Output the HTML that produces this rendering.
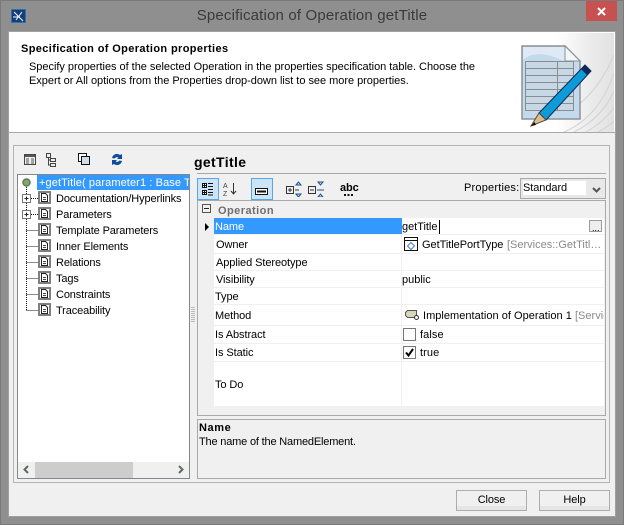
<!DOCTYPE html>
<html><head><meta charset="utf-8"><style>
html,body{margin:0;padding:0;width:624px;height:525px;overflow:hidden;background:#8f8f8f}
*{box-sizing:border-box}
.a{position:absolute}
.t{position:absolute;font:11px/14px "Liberation Sans",sans-serif;color:#000;white-space:nowrap}
.h{position:absolute;height:1px;background:#f0f0f0}
.v{position:absolute;width:1px;background:#f0f0f0}
.l{letter-spacing:-.08px}
.n{letter-spacing:-.125px}
.btn{position:absolute;top:490px;height:21px;background:linear-gradient(#f0f0f0 0,#f0f0f0 15px,#e5e5e5 15px);border:1px solid #adadad;font:11px/19px "Liberation Sans",sans-serif;letter-spacing:-.1px;text-align:center;color:#000}
</style></head><body>
<div class="a" style="left:0;top:0;width:624px;height:525px;background:#8f8f8f;border:1px solid #7a7a7a"></div>
<svg class="a" style="left:11px;top:9px" width="16" height="15" viewBox="0 0 16 15"><rect x=".5" y=".5" width="14" height="13" fill="#123f7c" stroke="#3a6ea8"/><path d="M3 3l9 9M11 3L5 11M2 8h7" stroke="#fff" fill="none"/></svg>
<div class="t" style="left:0;width:624px;top:7px;text-align:center;font-size:15px;line-height:18px;color:#3a3a3a;letter-spacing:.17px">Specification of Operation getTitle</div>
<div class="a" style="left:586px;top:1px;width:31px;height:20px;background:#c75050"></div>
<svg class="a" style="left:597px;top:7px" width="9" height="9"><path d="M1 1l7 7M8 1L1 8" stroke="#fff" stroke-width="2"/></svg>

<div class="a" style="left:8px;top:31px;width:608px;height:486px;background:#f0f0f0;border:1px solid #a0a0a0"></div>
<div class="a" style="left:9px;top:32px;width:606px;height:101px;background:#fff;border-bottom:1px solid #a9a9a9"></div>
<svg class="a" style="left:556px;top:33px" width="58" height="99" fill="none">
<defs><linearGradient id="g" x1="0" x2="1"><stop offset="0" stop-color="#fff"/><stop offset=".6" stop-color="#ebebeb"/><stop offset="1" stop-color="#e2e2e2"/></linearGradient></defs>
<rect width="58" height="99" fill="url(#g)"/>
<path d="M8 99C30 90 48 70 58 40M18 99C36 90 50 76 58 58M30 99C42 92 52 84 58 74M8 80C28 72 46 50 58 22M42 99C48 96 54 92 58 88" stroke="#d2d2d2"/>
</svg>
<svg class="a" style="left:520px;top:42px" width="76" height="86" viewBox="0 0 76 86">
<path d="M2 4H45L60 19V77H2Z" fill="#c3d9ec" stroke="#8a929a" stroke-width="1.500"/>
<path d="M3 5H45L46 20C30 12 14 8 3 18Z" fill="#dfe9f3"/>
<path d="M45 4V19H60Z" fill="#f3f7fa" stroke="#8a929a"/>
<path d="M5.500 19.500H53.500V68.500H5.500ZM5.500 26.500H53.500M5.500 33.500H53.500M5.500 40.500H53.500M5.500 47.500H53.500M5.500 54.500H53.500M5.500 61.500H53.500M37.500 19.500V68.500" fill="#c9d5df" fill-opacity=".5" stroke="#8c8c8c"/>
<path d="M65 23L71 29L26 78L19 71Z" fill="#0f9ad8" stroke="#0a2a50"/>
<path d="M65 23L71 29L67 33L61 27Z" fill="#12285a"/>
<path d="M19 71L26 78L11 84Z" fill="#d9bc8f" stroke="#5a4a30"/>
<path d="M11 84L14.500 80L16 83Z" fill="#111"/>
</svg>
<div class="t" style="left:21px;top:42px;font-weight:bold;letter-spacing:.37px">Specification of Operation properties</div>
<div class="t" style="left:29px;top:60px;letter-spacing:-.03px">Specify properties of the selected Operation in the properties specification table. Choose the</div>
<div class="t" style="left:29px;top:74px;letter-spacing:-.03px">Expert or All options from the Properties drop-down list to see more properties.</div>

<div class="a" style="left:13px;top:145px;width:597px;height:338px;border:1px solid #b4b4b4"></div>
<svg class="a" style="left:23px;top:152px" width="110" height="16" viewBox="0 0 110 16" fill="none">
<rect x="1.500" y="2.500" width="11" height="10" fill="#eee" stroke="#444"/><path d="M2 3h10v2H2z" fill="#555"/><path d="M3 7h3M8 7h3M3 9h3M8 9h3M3 11h3M8 11h3" stroke="#555"/>
<path d="M23.500 1.500h4v4h-4zM27.500 6.500h5v3h-5zM27.500 11.500h5v3h-5zM25.500 5.500v7.500h2M25.500 8h2" stroke="#444" fill="#eee"/>
<rect x="55.500" y="1.500" width="8" height="8" fill="#fff" stroke="#111"/><rect x="58.500" y="4.500" width="8" height="8" fill="#cfdde8" stroke="#111"/>
<path d="M89 6a5 5 0 0 1 8-3l2-1v5h-5l1.500-1.500a3 3 0 0 0-4 1zM99 9a5 5 0 0 1-8 3l-2 1V8h5l-1.500 1.500a3 3 0 0 0 4-1z" fill="#0f4c9c"/>
</svg>

<!-- tree -->
<div class="a" style="left:17px;top:174px;width:173px;height:305px;background:#fff;border:1px solid #828790"></div>
<div class="a" style="left:37px;top:175px;width:152px;height:15px;background:#3399ff;overflow:hidden"><div class="t" style="left:2px;top:1px;color:#fff;letter-spacing:.1px">+getTitle( parameter1 : Base Type</div></div>
<svg class="a" style="left:18px;top:175px" width="22" height="146" fill="none">
<circle cx="8.500" cy="7.500" r="3.500" fill="#7fa86a" stroke="#5d7d55" stroke-width="1.500"/>
<path d="M8.500 12V136M13 23.500h8M13 39.500h8M8.500 55.500h12M8.500 71.500h12M8.500 87.500h12M8.500 103.500h12M8.500 119.500h12M8.500 135.500h12" stroke="#111" stroke-dasharray="1 1" shape-rendering="crispEdges"/>
<rect x="4.500" y="19.500" width="8" height="8" fill="#fff" stroke="#777"/><path d="M6.500 23.500h4M8.500 21.500v4" stroke="#222"/>
<rect x="4.500" y="35.500" width="8" height="8" fill="#fff" stroke="#777"/><path d="M6.500 39.500h4M8.500 37.500v4" stroke="#222"/>
</svg>
<svg class="a" style="left:38px;top:191px" width="14" height="128" fill="none">
<path d="M1 1h11v11H1zM1 17h11v11H1zM1 33h11v11H1zM1 49h11v11H1zM1 65h11v11H1zM1 81h11v11H1zM1 97h11v11H1zM1 113h11v11H1z" fill="#fff" stroke="#808080" stroke-width="2"/>
<path d="M3.500 2.500h4l2 2v6h-6zM3.500 18.500h4l2 2v6h-6zM3.500 34.500h4l2 2v6h-6zM3.500 50.500h4l2 2v6h-6zM3.500 66.500h4l2 2v6h-6zM3.500 82.500h4l2 2v6h-6zM3.500 98.500h4l2 2v6h-6zM3.500 114.500h4l2 2v6h-6z" stroke="#222"/>
<path d="M5 6.500h3M5 8.500h3M5 22.500h3M5 24.500h3M5 38.500h3M5 40.500h3M5 54.500h3M5 56.500h3M5 70.500h3M5 72.500h3M5 86.500h3M5 88.500h3M5 102.500h3M5 104.500h3M5 118.500h3M5 120.500h3" stroke="#444"/>
</svg>
<div class="t n" style="left:56px;top:192px">Documentation/Hyperlinks</div>
<div class="t n" style="left:56px;top:208px">Parameters</div>
<div class="t n" style="left:56px;top:224px">Template Parameters</div>
<div class="t n" style="left:56px;top:240px">Inner Elements</div>
<div class="t n" style="left:56px;top:256px">Relations</div>
<div class="t n" style="left:56px;top:272px">Tags</div>
<div class="t n" style="left:56px;top:288px">Constraints</div>
<div class="t n" style="left:56px;top:304px">Traceability</div>
<div class="a" style="left:18px;top:462px;width:171px;height:16px;background:#f0f0f0"></div>
<div class="a" style="left:35px;top:462px;width:98px;height:16px;background:#cdcdcd"></div>
<svg class="a" style="left:23px;top:465px" width="162" height="10" fill="none"><path d="M5 1L1.500 4.500L5 8M156 1L159.500 4.500L156 8" stroke="#666" stroke-width="2"/></svg>
<div class="a" style="left:191px;top:307px;width:4px;height:16px;background:repeating-linear-gradient(#bbb 0 1px,transparent 1px 2px)"></div>

<!-- right -->
<div class="t" style="left:194px;top:154px;font-size:14px;line-height:16px;font-weight:bold;letter-spacing:.35px">getTitle</div>
<div class="a" style="left:197px;top:173px;width:409px;height:1px;background:#a9a9a9"></div>
<div class="a" style="left:197px;top:178px;width:22px;height:22px;background:#cce4f7;border:1px solid #5ba6e8"></div>
<div class="a" style="left:251px;top:178px;width:22px;height:22px;background:#cce4f7;border:1px solid #5ba6e8"></div>
<svg class="a" style="left:200px;top:181px" width="160" height="16" fill="none">
<path d="M2.500 2.500h4v4h-4zM2.500 9.500h4v4h-4z" fill="#fff" stroke="#111"/><path d="M4.500 2.500v4M2.500 4.500h4M4.500 9.500v4M2.500 11.500h4" stroke="#111"/><path d="M8 2.500h5M8 5.500h5M8 8.500h5M8 11.500h5M8 14h5" stroke="#111"/>
<text x="23" y="7" font-family="Liberation Sans" font-size="7" fill="#444">A</text><text x="23" y="15" font-family="Liberation Sans" font-size="7" fill="#444">Z</text><path d="M33.500 2v10M31 10l2.500 3L36 10" stroke="#333"/>
<rect x="55.500" y="7.500" width="12" height="6" fill="#fff" stroke="#111"/><path d="M57 10.500h9" stroke="#111" stroke-width="2"/>
<path d="M86.500 5.500h7v7h-7zM88 9h4M90 7v4M95 9h4" stroke="#333"/><path d="M96 4l2.500-3L101 4zM96 13l2.500 3L101 13z" fill="#cfe0f0" stroke="#1e4f90"/>
<path d="M108.500 5.500h7v7h-7zM110 9h4" stroke="#333"/><path d="M118 1l2.500 3L123 1zM118 16l2.500-3L123 16zM117 9h7" fill="#cfe0f0" stroke="#1e4f90"/>
<path d="M144 14h2M147.500 14h2M151 14h2" stroke="#111" stroke-width="2"/>
</svg>
<div class="t" style="left:340px;top:182px;font-size:11px;line-height:12px;font-weight:bold;letter-spacing:-.1px">abc</div>
<div class="t" style="left:464px;top:181px;letter-spacing:.2px">Properties:</div>
<div class="a" style="left:520px;top:178px;width:86px;height:21px;background:#e8e8e8;border:1px solid #a9a9a9"></div>
<div class="a" style="left:523px;top:181px;width:63px;height:14px;background:#fff"></div>
<div class="t" style="left:523px;top:181px;letter-spacing:-.07px">Standard</div>
<svg class="a" style="left:592px;top:187px" width="10" height="8"><path d="M1 1l3.500 3.500L8 1" fill="none" stroke="#555" stroke-width="2"/></svg>

<div class="a" style="left:197px;top:200px;width:409px;height:216px;border:1px solid #a9a9a9"></div>
<div class="a" style="left:214px;top:218px;width:390px;height:188px;background:#fff"></div>
<div class="a" style="left:214px;top:218px;width:187px;height:16px;background:#3399ff"></div>
<div class="h" style="left:214px;top:234px;width:390px"></div>
<div class="h" style="left:214px;top:253px;width:390px"></div>
<div class="h" style="left:214px;top:270px;width:390px"></div>
<div class="h" style="left:214px;top:287px;width:390px"></div>
<div class="h" style="left:214px;top:304px;width:390px"></div>
<div class="h" style="left:214px;top:325px;width:390px"></div>
<div class="h" style="left:214px;top:343px;width:390px"></div>
<div class="h" style="left:214px;top:361px;width:390px"></div>
<div class="v" style="left:401px;top:234px;height:172px"></div>
<div class="a" style="left:401px;top:218px;width:1px;height:16px;background:#3399ff"></div>
<svg class="a" style="left:202px;top:204px" width="11" height="30" fill="none"><rect x=".5" y=".5" width="8" height="8" stroke="#555"/><path d="M2 4.500h5" stroke="#222"/><path d="M3 19l4 4-4 4z" fill="#000"/></svg>
<div class="t" style="left:218px;top:204px;font-weight:bold;color:#6e6e6e;letter-spacing:.45px">Operation</div>
<div class="t l" style="left:215px;top:220px;color:#fff">Name</div>
<div class="t l" style="left:216px;top:238px">Owner</div>
<div class="t l" style="left:216px;top:256px">Applied Stereotype</div>
<div class="t l" style="left:216px;top:273px">Visibility</div>
<div class="t l" style="left:215px;top:290px">Type</div>
<div class="t l" style="left:215px;top:309px">Method</div>
<div class="t l" style="left:215px;top:328px">Is Abstract</div>
<div class="t l" style="left:215px;top:346px">Is Static</div>
<div class="t l" style="left:215px;top:378px">To Do</div>
<div class="t" style="left:402px;top:220px;letter-spacing:-.03px">getTitle</div>
<div class="a" style="left:439px;top:220px;width:1px;height:14px;background:#000"></div>
<div class="a" style="left:589px;top:220px;width:13px;height:12px;background:#eee;border:1px solid #9a9a9a"></div>
<div class="t" style="left:592px;top:221px;font-size:9px">...</div>
<svg class="a" style="left:404px;top:237px" width="15" height="15" fill="none"><rect x=".5" y=".5" width="13" height="13" fill="#fff" stroke="#111"/><path d="M1 3.500h12" stroke="#111"/><path d="M7 5.500l3.500 3.500L7 12.500 3.500 9z" stroke="#4a78c8"/></svg>
<div class="t" style="left:422px;top:238px;letter-spacing:-.05px">GetTitlePortType</div>
<div class="t" style="left:507px;top:238px;color:#8a8a8a;letter-spacing:0">[Services::GetTitl…</div>
<div class="t" style="left:402px;top:273px;letter-spacing:0">public</div>
<svg class="a" style="left:404px;top:309px" width="16" height="12" fill="none"><path d="M1.500 3.500l2-2h9v7h-9l-2-2z" fill="#d8d8b8" stroke="#555"/><circle cx="12.500" cy="8.500" r="2" fill="#fff" stroke="#333"/></svg>
<div class="a" style="left:423px;top:306px;width:181px;height:18px;overflow:hidden"><div class="t" style="left:0;top:3px;letter-spacing:.03px">Implementation of Operation 1 <span style="color:#8a8a8a">[Services::GetTitle</span></div></div>
<div class="a" style="left:403px;top:328px;width:13px;height:13px;background:#fff;border:1px solid #777"></div>
<div class="t" style="left:420px;top:328px;letter-spacing:.1px">false</div>
<div class="a" style="left:403px;top:346px;width:13px;height:13px;background:#fff;border:1px solid #777"></div>
<svg class="a" style="left:403px;top:346px" width="13" height="13" fill="none"><path d="M3 6.500l2.500 3L10 3" stroke="#000" stroke-width="2"/></svg>
<div class="t" style="left:420px;top:346px;letter-spacing:.1px">true</div>

<div class="a" style="left:197px;top:419px;width:409px;height:60px;border:1px solid #a9a9a9"></div>
<div class="t" style="left:199px;top:421px;font-weight:bold;letter-spacing:.6px">Name</div>
<div class="t" style="left:199px;top:435px;letter-spacing:-.18px">The name of the NamedElement.</div>

<div class="btn" style="left:456px;width:71px">Close</div>
<div class="btn" style="left:539px;width:71px">Help</div>
</body></html>
